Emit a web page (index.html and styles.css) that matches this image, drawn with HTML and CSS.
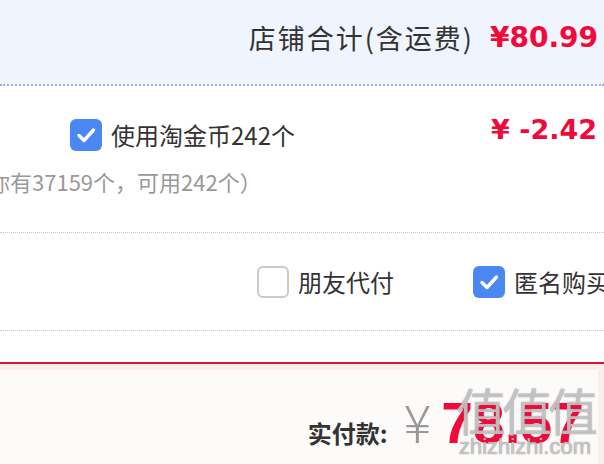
FILE: index.html
```html
<!DOCTYPE html>
<html lang="zh-CN">
<head>
  <meta charset="UTF-8">
  <title>确认订单</title>
  <link rel="stylesheet" href="styles.css">
</head>

<body>
  <div class="order">
    <div class="shop-total">
      <span class="label">店铺合计(含运费)</span>
      <span class="price">¥80.99</span>
    </div>

    <div class="coin">
      <div class="coin-row">
        <label class="opt">
          <span class="check on">
            <svg viewBox="0 0 32 32" width="32" height="32"><path d="M9 16.5l5 5L23.5 11" fill="none" stroke="#fff" stroke-width="3.4" stroke-linecap="round" stroke-linejoin="round"/></svg>
          </span>
          <span class="txt">使用淘金币242个</span>
        </label>
        <span class="price discount">¥ -2.42</span>
      </div>
      <p class="coin-note">（你有37159个，可用242个）</p>
    </div>

    <div class="options">
      <label class="opt">
        <span class="check"></span>
        <span class="txt">朋友代付</span>
      </label>
      <label class="opt">
        <span class="check on">
          <svg viewBox="0 0 32 32" width="32" height="32"><path d="M9 16.5l5 5L23.5 11" fill="none" stroke="#fff" stroke-width="3.4" stroke-linecap="round" stroke-linejoin="round"/></svg>
        </span>
        <span class="txt">匿名购买</span>
      </label>
    </div>

    <div class="spacer"></div>

    <div class="pay">
      <div class="pay-card">
        <span class="pay-label">实付款:</span>
        <span class="pay-yen">¥</span>
        <span class="pay-num">78.57</span>
      </div>
      <!-- 水印 -->
      <div class="mark">
        <span class="mark-big">值值值</span>
        <span class="mark-small">zhizhizhi.com</span>
      </div>
    </div>
  </div>
</body>
</html>
```

FILE: styles.css
```css
body {
  margin: 0;
  background: #fff;
  font-family: "Noto Sans CJK SC", "Noto Sans", sans-serif;
  color: #333;
}
.order {
  width: 604px;
  height: 464px;
  overflow: hidden;
}

/* 店铺合计 */
.shop-total {
  height: 86px;
  box-sizing: border-box;
  background: #eff4fd;
  border-bottom: 2px dotted #9ab5e6;
  display: flex;
  justify-content: flex-end;
  align-items: center;
  padding-right: 6px;
}
.shop-total .label {
  font-size: 27px;
  letter-spacing: 2px;
  color: #333;
  margin-right: 16px;
  padding-bottom: 10px;
}
.price {
  font-family: "DejaVu Sans", sans-serif;
  font-weight: bold;
  color: #f2093a;
  font-size: 28px;
}
.shop-total .price {
  padding-bottom: 10px;
}

/* 淘金币 */
.coin {
  height: 147px;
  box-sizing: border-box;
  border-bottom: 1px dotted #c8c8c8;
  padding-top: 31px;
}
.coin-row {
  display: flex;
  justify-content: space-between;
  align-items: center;
  padding-left: 70px;
  padding-right: 7px;
}
.discount {
  font-size: 27px;
  margin-top: -10px;
}
.coin-note {
  margin: 14px 0 0 -34px;
  font-size: 22px;
  line-height: 30px;
  color: #999;
}

.opt {
  display: flex;
  align-items: center;
}
.check {
  width: 32px;
  height: 32px;
  box-sizing: border-box;
  border-radius: 6px;
  border: 2px solid #c9c9ce;
  background: #fff;
  display: flex;
  align-items: center;
  justify-content: center;
  margin-right: 9px;
}
.check.on {
  border: none;
  background: #4a87f0;
}
.txt {
  font-size: 24px;
  color: #333;
  white-space: nowrap;
}

/* 朋友代付 / 匿名购买 */
.options {
  height: 98px;
  box-sizing: border-box;
  border-bottom: 1px dotted #c8c8c8;
  display: flex;
  align-items: center;
  padding-left: 257px;
  gap: 79px;
}

.spacer {
  height: 31px;
  border-bottom: 2px solid #e3103d;
}

/* 实付款 */
.pay {
  position: relative;
  height: 100px;
  background: #fcefea;
  padding-top: 6px;
  box-sizing: border-box;
}
.pay-card {
  height: 100%;
  margin-right: 6px;
  background: #fdfbfa;
  display: flex;
  justify-content: flex-end;
  align-items: baseline;
  padding-right: 14px;
  padding-top: 13px;
  box-sizing: border-box;
}
.pay-label {
  font-size: 24px;
  font-weight: bold;
  color: #333;
  margin-right: 16px;
}
.pay-yen {
  font-size: 52px;
  color: #999;
  font-weight: 300;
  margin-right: 10px;
}
.pay-num {
  font-family: "Liberation Sans", sans-serif;
  font-weight: bold;
  font-size: 57px;
  color: #f2093a;
}

.mark {
  position: absolute;
  left: 452px;
  top: 18px;
  width: 146px;
  display: flex;
  flex-direction: column;
  align-items: center;
  color: rgba(255, 255, 255, 0.5);
  text-shadow: 0 0 1px rgba(120, 120, 120, 0.7), 0 0 1px rgba(120, 120, 120, 0.7);
}
.mark-big {
  font-size: 50px;
  line-height: 54px;
  letter-spacing: -4px;
}
.mark-small {
  font-family: "Liberation Sans", sans-serif;
  font-size: 22px;
  line-height: 22px;
}
```
